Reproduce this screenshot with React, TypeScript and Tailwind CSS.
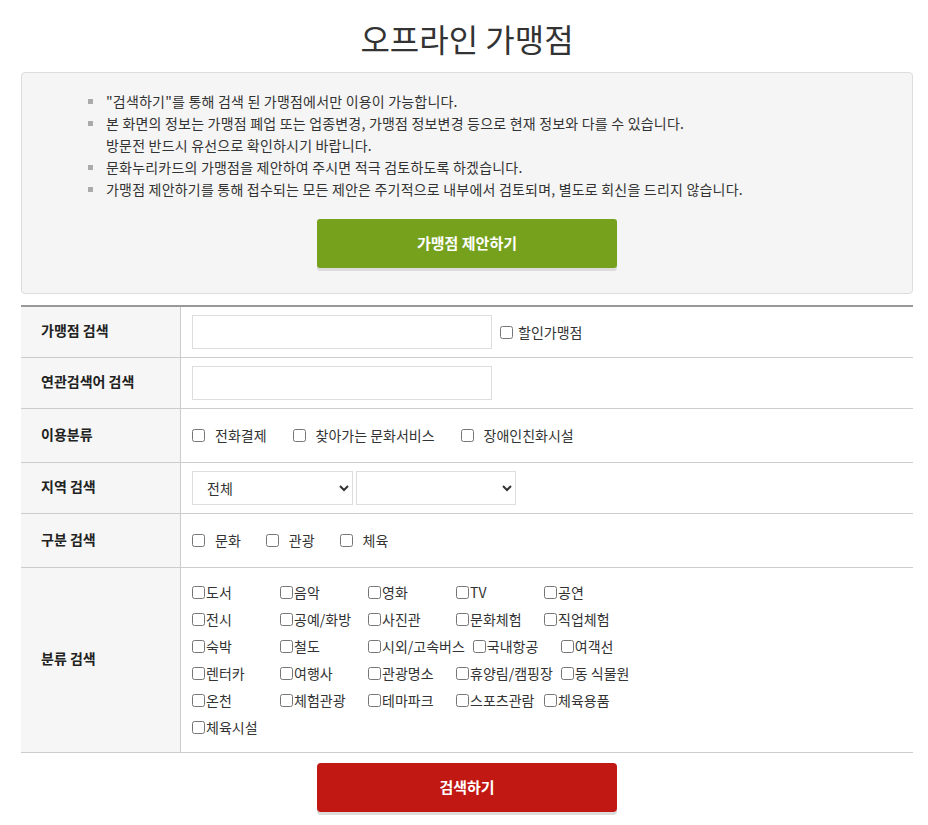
import React from 'react';

const FONT = '"Noto Sans CJK KR", "Noto Sans", sans-serif';

const notices = [
  ['"검색하기"를 통해 검색 된 가맹점에서만 이용이 가능합니다.'],
  ['본 화면의 정보는 가맹점 폐업 또는 업종변경, 가맹점 정보변경 등으로 현재 정보와 다를 수 있습니다.', '방문전 반드시 유선으로 확인하시기 바랍니다.'],
  ['문화누리카드의 가맹점을 제안하여 주시면 적극 검토하도록 하겠습니다.'],
  ['가맹점 제안하기를 통해 접수되는 모든 제안은 주기적으로 내부에서 검토되며, 별도로 회신을 드리지 않습니다.'],
];

const categories = [
  '도서', '음악', '영화', 'TV', '공연',
  '전시', '공예/화방', '사진관', '문화체험', '직업체험',
  '숙박', '철도', '시외/고속버스', '국내항공', '여객선',
  '렌터카', '여행사', '관광명소', '휴양림/캠핑장', '동 식물원',
  '온천', '체험관광', '테마파크', '스포츠관람', '체육용품',
  '체육시설',
];

const Check = () => (
  <input type="checkbox" className="m-0 h-[13px] w-[13px] shrink-0 accent-gray-600" />
);

const Row = ({ label, h, children }: { label: string; h: string; children: React.ReactNode }) => (
  <div className={`flex border-b border-[#cccccc] ${h}`}>
    <div className="flex w-[160px] shrink-0 items-center border-r border-[#cccccc] bg-[#f6f6f6] pb-[3px] pl-5 text-[14px] font-bold text-[#222]">
      {label}
    </div>
    <div className="flex flex-1 items-center pl-[11px]">{children}</div>
  </div>
);

export default function App() {
  return (
    <div className="min-h-[825px] bg-white text-[#333]" style={{ fontFamily: FONT }}>
      <div className="ml-[21px] w-[892px] pt-[14px]">
        <h1 className="text-center text-[32px] font-normal leading-[48px] text-[#333]">오프라인 가맹점</h1>

        <div className="mt-[10px] rounded-[4px] border border-[#dddddd] bg-[#f5f5f5] pb-[25px] pt-[17px]">
          <ul className="pl-[66px] text-[14px] leading-[22px] tracking-[0.2px] text-[#333]">
            {notices.map((lines, i) => (
              <li key={i} className="flex">
                <span className="mr-[13px] mt-[9px] h-[5px] w-[5px] shrink-0 bg-[#aaaaaa]"></span>
                <span>
                  {lines.map((l, j) => (
                    <div key={j}>{l}</div>
                  ))}
                </span>
              </li>
            ))}
          </ul>
          <div className="mt-[19px] flex justify-center">
            <button className="h-[49px] w-[300px] rounded-[3px] bg-[#76a11c] text-[15px] font-bold text-white shadow-[0_3px_0_#dcdcdc]">
              가맹점 제안하기
            </button>
          </div>
        </div>

        <div className="mt-[11px] border-t-2 border-[#999999]">
          <Row label="가맹점 검색" h="h-[51px]">
            <input className="h-[34px] w-[300px] border border-[#dddddd] bg-white" />
            <label className="ml-[8px] flex items-center gap-[5px] text-[14px]">
              <Check />
              할인가맹점
            </label>
          </Row>
          <Row label="연관검색어 검색" h="h-[51px]">
            <input className="h-[34px] w-[300px] border border-[#dddddd] bg-white" />
          </Row>
          <Row label="이용분류" h="h-[54px]">
            <div className="flex items-center text-[14px]">
              {['전화결제', '찾아가는 문화서비스', '장애인친화시설'].map((t) => (
                <label key={t} className="mr-[26px] flex items-center gap-[10px]">
                  <Check />
                  {t}
                </label>
              ))}
            </div>
          </Row>
          <Row label="지역 검색" h="h-[51px]">
            <select className="h-[34px] w-[161px] border border-[#dddddd] bg-white pl-[10px] text-[14px]">
              <option>전체</option>
            </select>
            <select className="ml-[3px] h-[34px] w-[160px] border border-[#dddddd] bg-white text-[14px]">
              <option></option>
            </select>
          </Row>
          <Row label="구분 검색" h="h-[54px]">
            <div className="flex items-center text-[14px]">
              {['문화', '관광', '체육'].map((t) => (
                <label key={t} className="mr-[25px] flex items-center gap-[10px]">
                  <Check />
                  {t}
                </label>
              ))}
            </div>
          </Row>
          <Row label="분류 검색" h="h-[185px]">
            <div className="flex w-[460px] flex-wrap text-[14px] leading-[27px]">
              {categories.map((t) => (
                <label key={t} className="flex min-w-[88px] items-center gap-[1px] pr-[8px] whitespace-nowrap">
                  <Check />
                  {t}
                </label>
              ))}
            </div>
          </Row>
        </div>

        <div className="mt-[10px] flex justify-center">
          <button className="h-[49px] w-[300px] rounded-[4px] bg-[#c21814] text-[15px] font-bold text-white shadow-[0_3px_0_#dcdcdc]">
            검색하기
          </button>
        </div>
      </div>
    </div>
  );
}
